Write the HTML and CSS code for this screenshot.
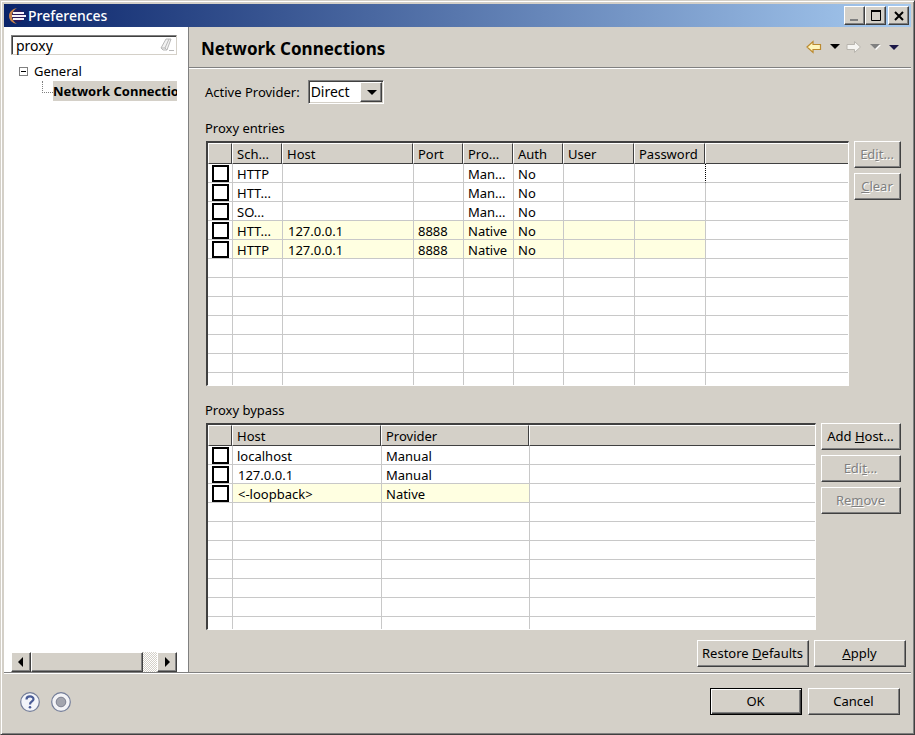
FILE: index.html
```html
<!DOCTYPE html>
<html lang="en">
<head>
    <meta charset="UTF-8">
    <meta name="viewport" content="width=device-width, initial-scale=1.0">
    <title>Preferences</title>
    <link rel="stylesheet" href="styles.css">
</head>
<body>

<div class="window">
    <header class="titlebar">
        <svg width="18" height="16" viewBox="0 0 18 16" aria-hidden="true">
            <circle cx="10" cy="8" r="6" fill="#2c1a58"/>
            <path d="M9 0C4 1 1 4 1 8s3 7 8 8C5 13 4 11 4 8s1-5 5-8z" fill="#c8814a"/>
            <path d="M5 5h11M4 8h14M5 11h11" stroke="#f4f2fa" stroke-width="2"/>
        </svg>
        <span class="title">Preferences</span>
        <button class="caption-btn" aria-label="Minimize">
            <svg width="14" height="12" viewBox="0 0 14 12"><path d="M2 10h8" stroke="#808080" stroke-width="2"/></svg>
        </button>
        <button class="caption-btn" aria-label="Maximize">
            <svg width="14" height="12" viewBox="0 0 14 12"><path d="M2.5 1v9.5h9V1" fill="none" stroke="#000"/><path d="M2 1h10" stroke="#000" stroke-width="2"/></svg>
        </button>
        <button class="caption-btn close" aria-label="Close">
            <svg width="14" height="12" viewBox="0 0 14 12"><path d="M3 2l8 8M11 2l-8 8" stroke="#000" stroke-width="2"/></svg>
        </button>
    </header>

    <div class="main">
        <aside class="sidebar">
            <div class="filter">
                <input type="text" value="proxy" aria-label="Filter">
                <svg width="14" height="14" viewBox="0 0 14 14" aria-hidden="true">
                    <path d="M6 1h5L7 12H3L1 10z" fill="#f2f2f2" stroke="#b8b8b8"/>
                    <path d="M9 1L5 10H1M5 10l2 2M9 12.5h5" fill="none" stroke="#b8b8b8"/>
                </svg>
            </div>
            <ul class="tree">
                <li>
                    <div class="node"><span class="toggle"></span>General</div>
                    <ul>
                        <li class="leaf"><span class="selected">Network Connections</span></li>
                    </ul>
                </li>
            </ul>
            <div class="scrollbar">
                <button aria-label="Scroll left"><svg width="6" height="10" viewBox="0 0 6 10"><path d="M5 0v10L0 5z"/></svg></button>
                <div class="thumb"></div>
                <div class="track"></div>
                <button aria-label="Scroll right"><svg width="6" height="10" viewBox="0 0 6 10"><path d="M1 0v10l5-5z"/></svg></button>
            </div>
        </aside>

        <section class="page">
            <div class="page-head">
                <h1>Network Connections</h1>
                <svg width="93" height="14" viewBox="0 0 93 14" aria-hidden="true">
                    <path d="M1 7l6-5.500v3h7.500v5H7v3z" fill="#fff6bc" stroke="#bb8a30" stroke-width="1.200"/>
                    <path d="M24 4h10l-5 5z"/>
                    <path d="M54.500 7l-6-5.500v3H41v5h7.500v3z" fill="#f6f5f2" stroke="#b8b5ae"/>
                    <path d="M65 5h10l-5 5z" fill="#fff"/>
                    <path d="M64 4h10l-5 5z" fill="#808080"/>
                    <path d="M83 5h10l-5 5z" fill="#1c1848"/>
                </svg>
            </div>

            <div class="content">
                <div class="provider">
                    <label for="provider">Active Provider:</label>
                    <div class="combo">
                        <select id="provider"><option>Direct</option><option>Manual</option><option>Native</option></select>
                    </div>
                </div>

                <h2>Proxy entries</h2>
                <div class="group">
                    <div class="list list-entries">
                        <table>
                            <colgroup>
                                <col class="c-check"><col class="c-short"><col class="c-host"><col class="c-short"><col class="c-short"><col class="c-short"><col class="c-mid"><col class="c-mid"><col>
                            </colgroup>
                            <thead>
                                <tr><th></th><th>Sch...</th><th>Host</th><th>Port</th><th>Pro...</th><th>Auth</th><th>User</th><th>Password</th><th></th></tr>
                            </thead>
                            <tbody>
                                <tr class="focused"><td><input type="checkbox" aria-label="HTTP manual"></td><td>HTTP</td><td></td><td></td><td>Man...</td><td>No</td><td></td><td></td><td></td></tr>
                                <tr><td><input type="checkbox" aria-label="HTTPS manual"></td><td>HTT...</td><td></td><td></td><td>Man...</td><td>No</td><td></td><td></td><td></td></tr>
                                <tr><td><input type="checkbox" aria-label="SOCKS manual"></td><td>SO...</td><td></td><td></td><td>Man...</td><td>No</td><td></td><td></td><td></td></tr>
                                <tr class="native"><td><input type="checkbox" aria-label="HTTPS native"></td><td>HTT...</td><td class="num">127.0.0.1</td><td>8888</td><td>Native</td><td>No</td><td></td><td></td><td></td></tr>
                                <tr class="native"><td><input type="checkbox" aria-label="HTTP native"></td><td>HTTP</td><td class="num">127.0.0.1</td><td>8888</td><td>Native</td><td>No</td><td></td><td></td><td></td></tr>
                                <tr><td></td><td></td><td></td><td></td><td></td><td></td><td></td><td></td><td></td></tr>
                                <tr><td></td><td></td><td></td><td></td><td></td><td></td><td></td><td></td><td></td></tr>
                                <tr><td></td><td></td><td></td><td></td><td></td><td></td><td></td><td></td><td></td></tr>
                                <tr><td></td><td></td><td></td><td></td><td></td><td></td><td></td><td></td><td></td></tr>
                                <tr><td></td><td></td><td></td><td></td><td></td><td></td><td></td><td></td><td></td></tr>
                                <tr><td></td><td></td><td></td><td></td><td></td><td></td><td></td><td></td><td></td></tr>
                                <tr><td></td><td></td><td></td><td></td><td></td><td></td><td></td><td></td><td></td></tr>
                            </tbody>
                        </table>
                    </div>
                    <div class="side-buttons narrow">
                        <button class="btn" disabled>Ed<u>i</u>t...</button>
                        <button class="btn" disabled><u>C</u>lear</button>
                    </div>
                </div>

                <h2>Proxy bypass</h2>
                <div class="group grow">
                    <div class="list">
                        <table>
                            <colgroup>
                                <col class="c-check"><col class="c-bypass"><col class="c-provider"><col>
                            </colgroup>
                            <thead>
                                <tr><th></th><th>Host</th><th>Provider</th><th></th></tr>
                            </thead>
                            <tbody>
                                <tr><td><input type="checkbox" aria-label="localhost"></td><td>localhost</td><td>Manual</td><td></td></tr>
                                <tr><td><input type="checkbox" aria-label="127.0.0.1"></td><td class="num">127.0.0.1</td><td>Manual</td><td></td></tr>
                                <tr class="native"><td><input type="checkbox" aria-label="loopback"></td><td class="num">&lt;-loopback&gt;</td><td>Native</td><td></td></tr>
                                <tr><td></td><td></td><td></td><td></td></tr>
                                <tr><td></td><td></td><td></td><td></td></tr>
                                <tr><td></td><td></td><td></td><td></td></tr>
                                <tr><td></td><td></td><td></td><td></td></tr>
                                <tr><td></td><td></td><td></td><td></td></tr>
                                <tr><td></td><td></td><td></td><td></td></tr>
                                <tr><td></td><td></td><td></td><td></td></tr>
                            </tbody>
                        </table>
                    </div>
                    <div class="side-buttons">
                        <button class="btn">Add <u>H</u>ost...</button>
                        <button class="btn" disabled>Edi<u>t</u>...</button>
                        <button class="btn" disabled>Re<u>m</u>ove</button>
                    </div>
                </div>
            </div>

            <div class="page-buttons">
                <button class="btn restore">Restore <u>D</u>efaults</button>
                <button class="btn wide"><u>A</u>pply</button>
            </div>
        </section>
    </div>

    <footer class="footer">
        <button class="round" aria-label="Help">
            <svg width="20" height="20" viewBox="0 0 20 20">
                <circle cx="10" cy="10" r="9.300" fill="#f3f5fa" stroke="#737d99" stroke-width="1.200"/>
                <path d="M6.500 7.500C6.500 3.500 13.500 3.500 13.500 7.200C13.500 9.500 10 9.500 10 12.500" fill="none" stroke="#4a5c96" stroke-width="2.200"/>
                <circle cx="10" cy="15.300" r="1.300" fill="#4a5c96"/>
            </svg>
        </button>
        <button class="round" aria-label="Record">
            <svg width="20" height="20" viewBox="0 0 20 20">
                <circle cx="10" cy="10" r="9.300" fill="#f3f3f6" stroke="#737d99" stroke-width="1.200"/>
                <circle cx="10" cy="10" r="4.800" fill="#a3a5ae" stroke="#7d8090"/>
            </svg>
        </button>
        <span class="spacer"></span>
        <button class="btn wide default">OK</button>
        <button class="btn wide">Cancel</button>
    </footer>
</div>

</body>
</html>
```
FILE: styles.css
```css
* {
    box-sizing: border-box;
}
body {
    margin: 0;
    font: 13px/18px "Noto Sans", "Open Sans", sans-serif;
    color: #000;
    background-color: #d4d0c8;
}
button, input, select {
    font: inherit;
    color: inherit;
}
h1, h2, ul {
    margin: 0;
    padding: 0;
}
ul {
    list-style: none;
}
svg {
    display: block;
    flex: none;
}

.window {
    display: flex;
    flex-direction: column;
    min-height: 100vh;
    padding: 3px 3px 2px 3px;
    border: 1px solid;
    border-color: #d4d0c8 #404040 #404040 #d4d0c8;
    box-shadow: inset 1px 1px #fff, inset -1px -1px #808080;
}

/* title bar */
.titlebar {
    display: flex;
    align-items: center;
    height: 23px;
    padding: 0 2px 0 4px;
    background: linear-gradient(to right, #0a246a, #a6caf0);
}
.title {
    flex: 1;
    margin-left: 2px;
    font-size: 14px;
    font-weight: 500;
    color: #fff;
}
.caption-btn {
    display: flex;
    align-items: center;
    justify-content: center;
    width: 21px;
    height: 19px;
    padding: 0;
    background-color: #d4d0c8;
    border: 1px solid;
    border-color: #fff #404040 #404040 #fff;
    box-shadow: inset -1px -1px #808080;
}
.caption-btn.close {
    margin-left: 2px;
}

.main {
    display: flex;
    flex: 1;
    min-height: 0;
    border-bottom: 1px solid #808080;
    box-shadow: 0 1px #fff;
}

/* tree side */
.sidebar {
    display: flex;
    flex-direction: column;
    width: 185px;
    padding: 8px 11px 0 7px;
    background-color: #fff;
    border-right: 1px solid #808080;
}
.filter {
    display: flex;
    align-items: center;
    height: 20px;
    padding-right: 2px;
    border: 1px solid;
    border-color: #808080 #d4d0c8 #d4d0c8 #808080;
    box-shadow: inset 1px 1px #404040;
}
.filter input {
    flex: 1;
    min-width: 0;
    padding: 1px 4px 0;
    font-size: 14px;
    background: none;
    border: 0;
    outline: 0;
}
.tree {
    flex: 1;
    padding-top: 6px;
    overflow: hidden;
}
.node {
    display: flex;
    align-items: center;
    height: 20px;
    padding-left: 8px;
}
.toggle {
    width: 9px;
    height: 9px;
    margin-right: 6px;
    border: 1px solid #808080;
    background: linear-gradient(#000, #000) center / 5px 1px no-repeat;
}
.leaf {
    display: flex;
    padding-left: 31px;
}
.leaf::before {
    content: "";
    flex: none;
    width: 10px;
    height: 11px;
    border-left: 1px dotted #808080;
    border-bottom: 1px dotted #808080;
}
.selected {
    flex: none;
    min-width: 100%;
    line-height: 20px;
    font-weight: bold;
    white-space: nowrap;
    background-color: #d4d0c8;
}
.scrollbar {
    display: flex;
    height: 20px;
}
.scrollbar button, .thumb {
    display: flex;
    align-items: center;
    justify-content: center;
    width: 20px;
    padding: 0;
    background-color: #d4d0c8;
    border: 1px solid;
    border-color: #fff #404040 #404040 #fff;
    box-shadow: inset -1px -1px #808080;
}
.scrollbar .thumb {
    flex: 8;
}
.track {
    flex: 1;
    background: repeating-conic-gradient(#fff 0 25%, #d4d0c8 0 50%) 0 0 / 2px 2px;
}

/* preference page */
.page {
    display: flex;
    flex-direction: column;
    flex: 1;
    min-width: 0;
}
.page-head {
    display: flex;
    align-items: center;
    justify-content: space-between;
    height: 41px;
    padding: 0 12px;
    border-bottom: 1px solid #808080;
    box-shadow: 0 1px #fff;
}
h1 {
    padding-top: 4px;
    font-size: 17px;
    line-height: 24px;
}
.content {
    display: flex;
    flex-direction: column;
    flex: 1;
    padding: 12px 10px 0 16px;
}
.provider {
    display: flex;
    align-items: center;
    gap: 8px;
    height: 24px;
}
.combo {
    position: relative;
    width: 76px;
    height: 24px;
    background-color: #fff;
    border: 1px solid;
    border-color: #808080 #fff #fff #808080;
    box-shadow: inset 1px 1px #404040, inset -1px -1px #d4d0c8;
}
.combo select {
    width: 100%;
    height: 100%;
    padding: 0 2px;
    font-size: 14px;
    appearance: none;
    background: none;
    border: 0;
    outline: 0;
}
.combo::before {
    content: "";
    position: absolute;
    top: 1px;
    right: 1px;
    bottom: 1px;
    width: 20px;
    background-color: #d4d0c8;
    border: 1px solid;
    border-color: #fff #404040 #404040 #fff;
    box-shadow: inset -1px -1px #808080;
    pointer-events: none;
}
.combo::after {
    content: "";
    position: absolute;
    top: 9px;
    right: 6px;
    border: 5px solid transparent;
    border-top-color: #000;
    border-bottom: 0;
    pointer-events: none;
}
h2 {
    margin-top: 15px;
    padding-bottom: 4px;
    font-size: 13px;
    line-height: 18px;
    font-weight: normal;
}
.group {
    display: flex;
    gap: 5px;
    padding-left: 1px;
}
.group.grow {
    flex: 1;
}
.list {
    flex: 1;
    overflow: hidden;
    background-color: #fff;
    border: 2px solid;
    border-color: #404040 #fff #fff #404040;
    border-width: 2px 1px 1px 2px;
}
.list-entries {
    height: 245px;
}
.grow .list {
    height: 207px;
}

table {
    width: 100%;
    table-layout: fixed;
    border-collapse: separate;
    border-spacing: 0;
}
.c-check { width: 24px; }
.c-short { width: 50px; }
.c-host { width: 131px; }
.c-mid { width: 71px; }
.c-bypass { width: 149px; }
.c-provider { width: 148px; }
th, td {
    padding: 0 0 0 4px;
    text-align: left;
    font-weight: normal;
    white-space: nowrap;
    overflow: hidden;
}
th {
    height: 21px;
    background-color: #d4d0c8;
    border: 1px solid;
    border-color: #fff #404040 #404040 #fff;
}
th:last-child {
    border-right: 0;
}
td {
    height: 19px;
    padding-top: 2px;
    line-height: 16px;
    border-left: 1px solid #c8c8c8;
    border-bottom: 1px solid #c8c8c8;
}
td:first-child {
    padding-top: 0;
    border-left: 0;
}
td.num {
    padding-left: 5px;
}
.native td {
    background-color: #ffffe1;
}
.native td:first-child, .native td:last-child {
    background-color: #fff;
}
.focused td:last-child {
    border-left: 1px dotted #000;
}
td input {
    display: block;
    width: 17px;
    height: 17px;
    margin: 0;
    appearance: none;
    background-color: #fff;
    border: 2px solid #000;
}

.side-buttons {
    display: flex;
    flex-direction: column;
    gap: 5px;
    width: 80px;
}
.side-buttons.narrow {
    width: 47px;
}
.btn {
    height: 27px;
    padding: 0 1px 2px 0;
    background-color: #d4d0c8;
    border: 1px solid;
    border-color: #fff #404040 #404040 #fff;
    box-shadow: inset -1px -1px #808080;
}
.btn:disabled {
    color: #808080;
    text-shadow: 1px 1px #fff;
}
.btn.wide {
    width: 92px;
}
.btn.restore {
    width: 112px;
}
.btn.default {
    border-color: #000;
    box-shadow: inset 1px 1px #fff, inset -1px -1px #404040, inset -2px -2px #808080;
}
.page-buttons {
    display: flex;
    justify-content: flex-end;
    gap: 5px;
    padding: 10px 5px 5px;
}

/* dialog buttons */
.footer {
    display: flex;
    align-items: center;
    gap: 6px;
    height: 59px;
    padding: 0 11px 2px 16px;
}
.round {
    padding: 0;
    margin-right: 5px;
    background: none;
    border: 0;
}
.spacer {
    flex: 1;
}
```
